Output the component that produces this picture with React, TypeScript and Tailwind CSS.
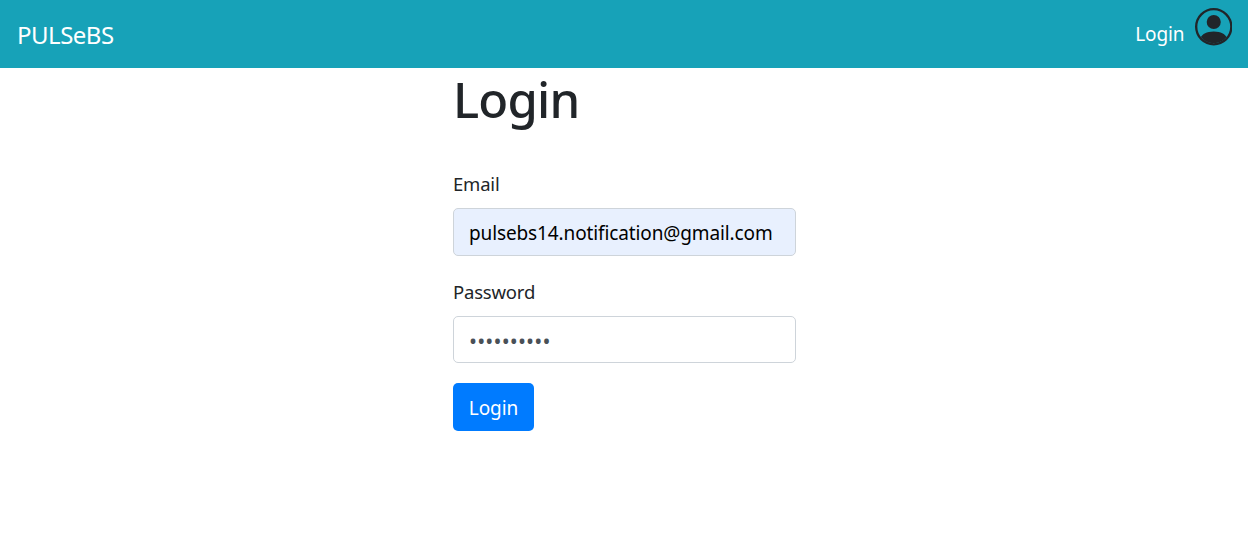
import React from "react";

function PersonCircle() {
  return (
    <svg viewBox="0 0 16 16" fill="#212529" className="h-[37.5px] w-[37.5px]">
      <path d="M13.468 12.37C12.758 11.226 11.195 10 8 10s-4.757 1.225-5.468 2.37A6.987 6.987 0 0 0 8 15a6.987 6.987 0 0 0 5.468-2.63z" />
      <path fillRule="evenodd" d="M8 9a3 3 0 1 0 0-6 3 3 0 0 0 0 6z" />
      <path fillRule="evenodd" d="M8 1a7 7 0 1 0 0 14A7 7 0 0 0 8 1zM0 8a8 8 0 1 1 16 0A8 8 0 0 1 0 8z" />
    </svg>
  );
}

export default function App() {
  return (
    <div className="h-[533px] overflow-hidden bg-white font-['Noto_Sans','Open_Sans',sans-serif] text-[#212529]">
      <nav className="flex h-[68px] items-start justify-between bg-[#17a2b8] pr-4 pl-[17px] text-white">
        <a href="#" className="mt-[17px] text-[24px] leading-9 tracking-[-0.5px]">PULSeBS</a>
        <div className="flex">
          <a href="#" className="mt-[19px] mr-[10px] text-[19px] leading-[30px] tracking-[-0.1px]">Login</a>
          <div className="mt-[8px]"><PersonCircle /></div>
        </div>
      </nav>
      <main className="ml-[453px] w-[343px]">
        <h1 className="h-[68px] pt-[2px] text-[49px] leading-[58px] font-medium tracking-[-0.8px]">Login</h1>
        <form>
          <label className="mt-8 block h-10 pt-px text-[18.5px] leading-[30px] tracking-[-0.2px]">Email</label>
          <input type="email" defaultValue="pulsebs14.notification@gmail.com" className="block h-12 w-full rounded-[5px] border border-[#ced4da] bg-[#e8f0fe] px-[15px] pt-[2px] text-[19px] tracking-[-0.12px] text-black" />
          <label className="mt-5 block h-10 pt-px text-[18.5px] leading-[30px] tracking-[-0.2px]">Password</label>
          <input type="password" defaultValue="password14" className="block h-[47px] w-full rounded-[5px] border border-[#ced4da] px-[15px] pt-[2px] text-[21.3px] tracking-[0.15px] text-[#495057]" />
          <button type="button" className="mt-5 block h-12 w-[81px] rounded-[5px] bg-[#007bff] pt-[2px] text-[19px] tracking-[-0.1px] text-white">Login</button>
        </form>
      </main>
    </div>
  );
}
